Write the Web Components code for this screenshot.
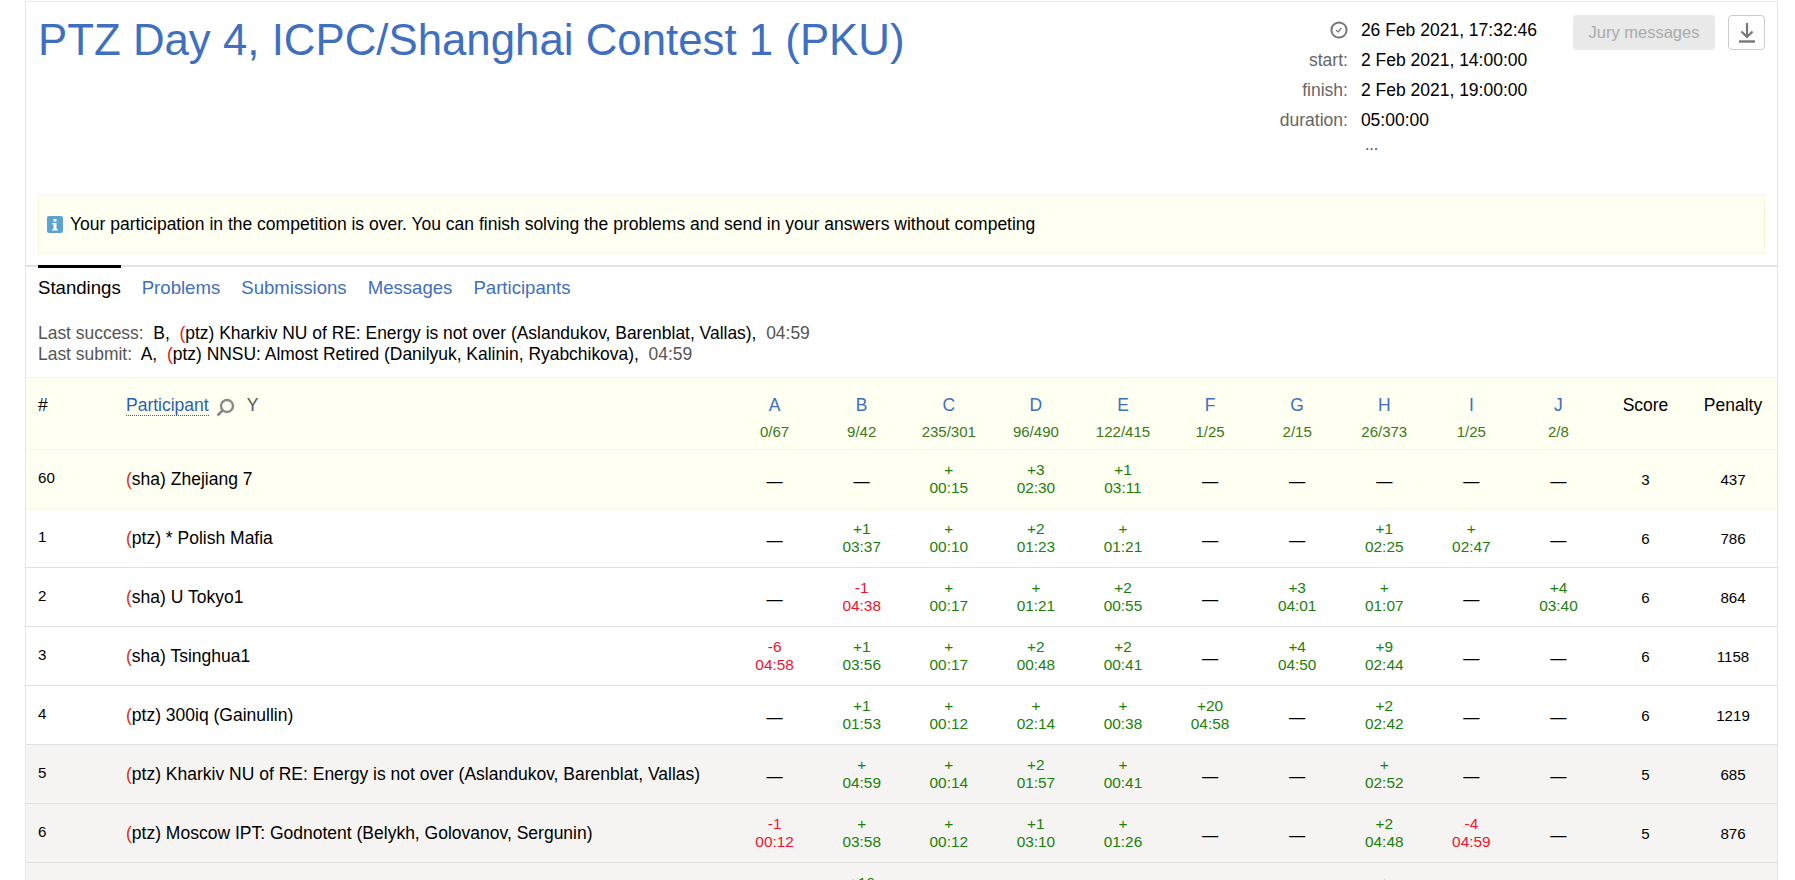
<!DOCTYPE html>
<html><head><meta charset="utf-8"><title>Standings</title>
<style>
html,body{margin:0;padding:0;background:#fff;overflow:hidden;height:880px}
body{font-family:"Liberation Sans",Arial,sans-serif;color:#000}
</style></head><body>
<contest-page></contest-page>
<template id="hdr"><style>
:host{display:block;height:263px;padding:0 12px;box-sizing:border-box;position:relative}
.top{display:flex;height:193px;align-items:flex-start}
h1{margin:0;flex:1;font-weight:400;font-size:43.8px;line-height:50px;color:#3f6fbf;padding-top:13px}
.info{display:grid;grid-template-columns:auto auto;column-gap:13px;font-size:17.5px;line-height:30px;padding-top:13px;margin-right:36px;align-content:start;justify-items:end}
.info .l{color:#666}.info .v{justify-self:start}
.dots{color:#2a4a90;padding-left:4px;line-height:28px;margin-top:-4px;font-size:16px}
.clock{align-self:center;display:flex}
.btns{display:flex;gap:13px;padding-top:13px}
.jury{width:142px;height:35px;background:#e9e9e9;border-radius:4px;color:#aaa;font-size:16.5px;display:flex;align-items:center;justify-content:center;box-sizing:border-box}
.dl{width:37px;height:35px;border:1px solid #ccc;border-radius:4px;box-sizing:border-box;display:flex;align-items:center;justify-content:center}
.alert{height:58px;box-sizing:border-box;border:1px solid #f8f4d8;background:#fffff2;display:flex;align-items:center;gap:7px;padding-left:8px;font-size:17.5px}
</style>
<div class="top"><h1>PTZ Day 4, ICPC/Shanghai Contest 1 (PKU)</h1>
<div class="info">
<span class="clock"><svg width="18" height="18" viewBox="0 0 18 18"><circle cx="9" cy="9" r="7.600" fill="none" stroke="#777" stroke-width="2"/><path d="M6 9.300l2.400 1.600 3-4" fill="none" stroke="#777" stroke-width="1.300"/></svg></span><span class="v">26 Feb 2021, 17:32:46</span>
<span class="l">start:</span><span class="v">2 Feb 2021, 14:00:00</span>
<span class="l">finish:</span><span class="v">2 Feb 2021, 19:00:00</span>
<span class="l">duration:</span><span class="v">05:00:00</span>
<span></span><span class="v dots">...</span>
</div>
<div class="btns"><div class="jury">Jury messages</div><div class="dl"><svg width="20" height="22" viewBox="0 0 20 22"><path d="M10 1v14M4.500 9.500L10 15l5.500-5.500" fill="none" stroke="#777" stroke-width="2.200"/><path d="M2 19.500h16" stroke="#777" stroke-width="2.400"/></svg></div></div>
</div>
<div class="alert"><svg width="16" height="17" viewBox="0 0 16 17"><rect width="16" height="17" rx="2" fill="#5ba4cf"/><rect x="6.500" y="3" width="3" height="2.500" fill="#fff"/><path d="M5.500 7h4v6h1.200v1.500H5.300V13h1.200V8.500h-1z" fill="#fff"/></svg><span>Your participation in the competition is over. You can finish solving the problems and send in your answers without competing</span></div>
</template>
<template id="tabs"><style>
:host{display:block;border-top:2px solid #e2e2e2;padding:0 12px;height:46px;box-sizing:content-box}
nav{display:flex;gap:21px;font-size:18.6px}
a{color:#3f6fbf;text-decoration:none;height:46px;line-height:39px;display:block;box-sizing:border-box;margin-top:-2px;border-top:3px solid transparent}
a.on{color:#000;border-top-color:#000}
</style><nav><a class="on">Standings</a><a>Problems</a><a>Submissions</a><a>Messages</a><a>Participants</a></nav></template>
<template id="last"><style>
:host{display:block;padding:10px 12px 0;height:54px;box-sizing:content-box;font-size:17.45px;line-height:21px}
.g{color:#555}.r{color:#e0201c}
div{height:21px;white-space:pre}
</style>
<div><span class="g">Last success:</span>  B,  <span class="r">(</span>ptz) Kharkiv NU of RE: Energy is not over (Aslandukov, Barenblat, Vallas),  <span class="g">04:59</span></div>
<div><span class="g">Last submit:</span>  A,  <span class="r">(</span>ptz) NNSU: Almost Retired (Danilyuk, Kalinin, Ryabchikova),  <span class="g">04:59</span></div>
</template>
<script>
const tpl=id=>document.getElementById(id).content.cloneNode(true);
class Simple extends HTMLElement{constructor(){super();this.attachShadow({mode:'open'}).appendChild(tpl(this.constructor.tid));}}
class CHeader extends Simple{static tid='hdr'}
class CTabs extends Simple{static tid='tabs'}
class CLast extends Simple{static tid='last'}
customElements.define('contest-header',CHeader);
customElements.define('contest-tabs',CTabs);
customElements.define('last-events',CLast);
const COLS='100px 1fr repeat(10,87.1px) 87px 88px';
class PCell extends HTMLElement{
 constructor(){super();const s=this.attachShadow({mode:'open'});
  const v=this.getAttribute('v')||'';
  let inner='';
  if(v==='-'){inner='<span class="d">—</span>';}
  else if(v){const [a,t]=v.split(' ');const bad=a[0]==='-';inner=`<span class="${bad?'bad':'ok'}">${a}<br>${t||'&nbsp;'}</span>`;}
  s.innerHTML=`<style>:host{display:flex;align-items:center;justify-content:center;text-align:center;font-size:15.4px;line-height:18px;padding-bottom:1px}
  .ok{color:#1b7f0a}.bad{color:#f3102c}.d{font-size:16.2px;position:relative;top:2px}</style>${inner}`;}
}
customElements.define('p-cell',PCell);
class SRow extends HTMLElement{
 constructor(){super();const s=this.attachShadow({mode:'open'});
  const cells=(this.getAttribute('cells')||'').split('|').map(v=>`<p-cell v="${v}"></p-cell>`).join('');
  const n=this.getAttribute('name');
  const nm=n?`<span><span class="r">(</span>${n.slice(1)}</span>`:'';
  s.innerHTML=`<style>:host{display:grid;grid-template-columns:${COLS};height:59px;box-sizing:border-box;border-bottom:1px solid var(--line,#e0e0e0);background:var(--bg,#fff);font-size:15.12px}
  :host([hl]){--bg:#fffff2;--line:#f8f4d8}:host([grey]){--bg:#f5f4f2}
  .c{display:flex;align-items:center}.num{padding-left:12px;padding-bottom:3px}.name{font-size:17.5px;white-space:nowrap}
  .r{color:#e0301c}.sc{justify-content:center}
  </style><div class="c num">${this.getAttribute('pos')}</div><div class="c name">${nm}</div>${cells}<div class="c sc">${this.getAttribute('score')}</div><div class="c sc">${this.getAttribute('pen')}</div>`;}
}
customElements.define('s-row',SRow);
class SHead extends HTMLElement{
 constructor(){super();const s=this.attachShadow({mode:'open'});
  const P=[['A','0/67'],['B','9/42'],['C','235/301'],['D','96/490'],['E','122/415'],['F','1/25'],['G','2/15'],['H','26/373'],['I','1/25'],['J','2/8']];
  s.innerHTML=`<style>:host{display:grid;grid-template-columns:${COLS};height:73px;box-sizing:border-box;border-top:1px solid #f8f4d8;border-bottom:1px solid #f8f4d8;background:#fffff2;font-size:17.5px;padding-top:17px}
  .num{padding-left:12px}.part{display:flex;align-items:flex-start;gap:7px;height:24px}
  .part a{color:#2a5fb5;border-bottom:1px dotted #2a5fb5;line-height:20px;height:20px}
  .y{color:#555;margin-left:5px}
  .p{text-align:center}.p b{display:block;font-weight:400;color:#3f6fbf;line-height:20px}.p i{display:block;font-style:normal;font-size:15px;color:#3a7a1a;line-height:18px;margin-top:8px}
  .t{text-align:center;line-height:20px}
  </style><div class="num">#</div><div class="part"><a>Participant</a><svg width="19" height="19" viewBox="0 0 19 19" style="margin-top:3px"><circle cx="11" cy="8" r="6" fill="none" stroke="#888" stroke-width="2.400"/><path d="M6.500 12.500L1.500 17.500" stroke="#888" stroke-width="2.600"/></svg><span class="y">Y</span></div>${P.map(([a,b])=>`<div class="p"><b>${a}</b><i>${b}</i></div>`).join('')}<div class="t">Score</div><div class="t">Penalty</div>`;}
}
customElements.define('s-head',SHead);
class ContestPage extends HTMLElement{
 constructor(){super();const s=this.attachShadow({mode:'open'});
 const R=[
 ['60','(sha) Zhejiang 7','-|-|+ 00:15|+3 02:30|+1 03:11|-|-|-|-|-','3','437','hl'],
 ['1','(ptz) * Polish Mafia','-|+1 03:37|+ 00:10|+2 01:23|+ 01:21|-|-|+1 02:25|+ 02:47|-','6','786',''],
 ['2','(sha) U Tokyo1','-|-1 04:38|+ 00:17|+ 01:21|+2 00:55|-|+3 04:01|+ 01:07|-|+4 03:40','6','864',''],
 ['3','(sha) Tsinghua1','-6 04:58|+1 03:56|+ 00:17|+2 00:48|+2 00:41|-|+4 04:50|+9 02:44|-|-','6','1158',''],
 ['4','(ptz) 300iq (Gainullin)','-|+1 01:53|+ 00:12|+ 02:14|+ 00:38|+20 04:58|-|+2 02:42|-|-','6','1219',''],
 ['5','(ptz) Kharkiv NU of RE: Energy is not over (Aslandukov, Barenblat, Vallas)','-|+ 04:59|+ 00:14|+2 01:57|+ 00:41|-|-|+ 02:52|-|-','5','685','grey'],
 ['6','(ptz) Moscow IPT: Godnotent (Belykh, Golovanov, Sergunin)','-1 00:12|+ 03:58|+ 00:12|+1 03:10|+ 01:26|-|-|+2 04:48|-4 04:59|-','5','876','grey'],
 ];
 const rows=R.map(r=>`<s-row pos="${r[0]}" name="${r[1]}" cells="${r[2]}" score="${r[3]}" pen="${r[4]}" ${r[5]}></s-row>`).join('');
 s.innerHTML=`<style>:host{display:block;margin:1px 17px 0 25px;border:1px solid #e6e6e6;border-width:1px 1px 0;height:879px;overflow:hidden;box-sizing:border-box}</style>
 <contest-header></contest-header><contest-tabs></contest-tabs><last-events></last-events><s-head></s-head>${rows}<s-row pos="" name="" cells="|+16 ||||||+ ||" score="" pen="" grey></s-row>`;}
}
customElements.define('contest-page',ContestPage);
</script>
</body></html>
